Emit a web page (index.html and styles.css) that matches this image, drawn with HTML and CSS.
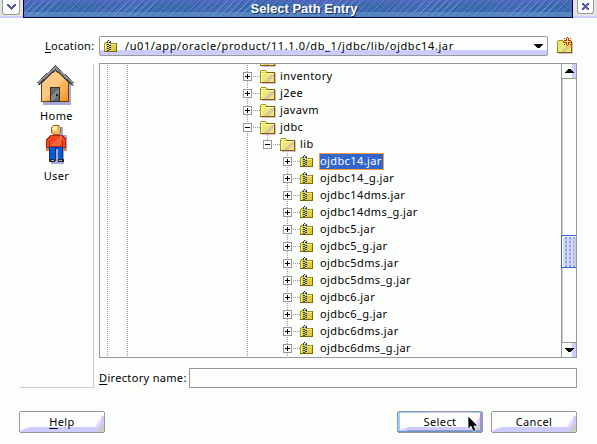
FILE: index.html
```html
<!DOCTYPE html>
<html lang="en">
<head>
<meta charset="utf-8">
<title>Select Path Entry</title>
<link rel="stylesheet" href="styles.css">
</head>
<body>
<svg class="defs" width="0" height="0" aria-hidden="true">
  <defs>
    <linearGradient id="wall" x1="0" y1="0" x2="1" y2="1"><stop offset="0" stop-color="#ffc890"/><stop offset=".5" stop-color="#ffc880"/><stop offset="1" stop-color="#f08818"/></linearGradient>
    <symbol id="folder" viewBox="0 0 17 15">
      <path d="M2 3h14v11H2z" fill="#dcb8e0"/>
      <path d="M0 1h1V0h5v1h1v1h8v11H0z" fill="#a09410"/>
      <path d="M1 1h5v2h8v9H1z" fill="#dcd858"/>
      <path d="M2 4h12v8H2z" fill="#ece878"/>
      <path d="M4 12 11 4h3v2L9 12z" fill="#dcc8a0"/>
      <path d="M1 1h5v1H1zM1 3h13v1H1zM1 4h1v8H1z" fill="#fffcb8"/>
      <path d="M7 2h8v1H7zM14 3h1v10h-1zM0 12h15v1H0z" fill="#806000"/>
    </symbol>
    <symbol id="jar" viewBox="0 0 14 14">
      <path d="M0 4h1V3h3v1h9v9H0z" fill="#a09820"/>
      <path d="M1 4h3v1h8v7H1z" fill="#d4d030"/>
      <path d="M7 10h1V9h1V8h1V7h1V6h1v2h-1v1h-1v1H9v1H8v1H7z" fill="#f4c860"/>
      <path d="M1 5h1v7H1zM7 5h5v1H7z" fill="#f4f090"/>
      <path d="M12 4h1v9h-1zM0 12h13v1H0z" fill="#806800"/>
      <path d="M4 1h2v11H4z" fill="#d4d4d4"/>
      <path d="M3 2h1v2H3zM4 1h1v1H4zM6 2h1v2H6zM5 3h1v1H5zM3 5h2v1H3zM5 6h2v1H5zM3 7h2v1H3zM5 8h2v1H5zM3 9h2v1H3zM5 10h2v1H5zM3 11h2v1H3z" fill="#383830"/>
    </symbol>
    <symbol id="plus" viewBox="0 0 9 9"><path d="M0 0h9v9H0z" fill="#999"/><path d="M1 1h7v7H1z" fill="#fff"/><path d="M2 4h5v1H2zM4 2h1v5H4z"/></symbol>
    <symbol id="minus" viewBox="0 0 9 9"><path d="M0 0h9v9H0z" fill="#999"/><path d="M1 1h7v7H1z" fill="#fff"/><path d="M2 4h5v1H2z"/></symbol>
    <symbol id="face" viewBox="0 0 86 22">
      <path d="M1 21v-2h3v-1h3v-1h3v-1h67v-3h2v-3h2V8h1V5h3v16z" fill="#ccccff"/>
      <path d="M1 19h2v-1h2v-1h3v1H5v1H3v1H1zM77 14h1v-2h2V9h1V6h1V4h1v4h-1v3h-1v3h-2v2h-2z" fill="#ffd8ff"/>
      <path d="M78 21v-3h2v-2h2v-3h3v8z" fill="#ccc"/>
      <path d="M1 0h84v1H1zM1 21h84v1H1zM0 1h1v20H0zM85 1h1v20h-1z" fill="#999"/>
    </symbol>
  </defs>
</svg>
<div class="window">
  <header class="titlebar">
    <div class="corner left"><span class="winbtn"><svg width="18" height="14" viewBox="0 0 18 14"><path d="M4 4h2v1h1v1h1v1h1V6h1V5h1V4h2v2h-1v1h-1v1h-1v1H9v1H8V9H7V8H6V7H5V6H4z" fill="#5858a8"/></svg></span></div>
    <div class="caption">Select Path Entry</div>
    <div class="corner right"><span class="winbtn"><svg width="16" height="14" viewBox="0 0 16 14"><path d="M4 3h2v1h1v1h1V4h1V3h2v2h-1v1H9v1h1v1h1v2H9V9H8V8H7v1H6v1H4V8h1V7h1V6H5V5H4z" fill="#5858a8"/></svg></span></div>
  </header>

  <div class="location">
    <label><u>L</u>ocation:</label>
    <div class="combo">
      <svg class="jar" width="14" height="14"><use href="#jar"/></svg>
      <span class="path">/u01/app/oracle/product/11.1.0/db_1/jdbc/lib/ojdbc14.jar</span>
      <svg class="arrow" width="9" height="5" viewBox="0 0 9 5"><path d="M0 0h9v1H8v1H7v1H6v1H3V3H2V2H1V1H0z"/></svg>
    </div>
    <svg class="newfolder" width="17" height="18" viewBox="0 0 17 18">
      <path d="M2 5h14v12H2z" fill="#dcb8e0"/>
      <path d="M0 4h1V3h5v1h1v1h8v11H0z" fill="#a09410"/>
      <path d="M1 4h5v2h8v9H1z" fill="#ece878"/>
      <path d="M3 15 10 8h4v1l-6 6z" fill="#dccc80"/>
      <path d="M14 5h1v11h-1zM0 15h15v1H0z" fill="#806000"/>
      <path d="M10 0h1v1h1v2h2v1h1v1h-1v1h-2v2h-1v1h-1V8H9V6H7V5H6V4h1V3h2V1h1zM7 1h1v1H7zM13 1h1v1h-1zM7 7h1v1H7zM13 7h1v1h-1z" fill="#c03000"/>
      <path d="M10 1h1v3h3v1h-3v3h-1V5H7V4h3z" fill="#ffd840"/>
      <path d="M10 3h1v1h1v1h-1v1h-1V5H9V4h1z" fill="#fff8c0"/>
    </svg>
  </div>

  <main class="body">
    <nav class="places">
      <svg class="home" width="40" height="40" viewBox="0 0 40 40">
        <path d="M7 15 24 5l13 16h-3v19H6z" fill="#a8a8d8"/>
        <path d="M4 17 18.500 5 32 17v20H4z" fill="url(#wall)"/>
        <path d="M5 37 31 12v8L17 37z" fill="#ffb050" opacity=".65"/>
        <path d="M4 18h1v18h26V17h1v20H4z" fill="#704000"/>
        <path d="M1 19 18.500 3 36 19" fill="none" stroke="#484848" stroke-width="4"/>
        <path d="M1 18 18.500 2.500 36 18" fill="none" stroke="#909090" stroke-width="2"/>
        <path d="M13.500 22.500h9v14h-9z" fill="#686868" stroke="#303030"/>
        <path d="M14 31 22 23v6l-7 7h-1z" fill="#888"/>
        <path d="M19 29h2v2h-2z" fill="#202020"/>
      </svg>
      <span>Home</span>
      <svg class="user" width="26" height="40" viewBox="0 0 26 40">
        <path d="M12 3h7v8h4v16h-3v13H7V28h5z" fill="#a8a8d8"/>
        <path d="M2 24h4v3H2zM18 24h4v3h-4z" fill="#d88040"/>
        <path d="M5 21h14v15h1v1h-6V25h-2v12H5z" fill="#0038a0"/>
        <path d="M6 23h5v12H6zM14 23h4v12h-4z" fill="#0858d0"/>
        <path d="M6 11h12l4 4v9h-3v-1H5v1H2v-9z" fill="#b02810"/>
        <path d="M7 12h10l4 4v7h-2v-6h-1v5H6v-5H5v6H3v-7z" fill="#f84820"/>
        <path d="M7 22 16 12h2l-1 8-3 2z" fill="#f06840"/>
        <circle cx="12" cy="6" r="5" fill="#f0b860" stroke="#a06020"/><circle cx="11" cy="4.500" r="2.500" fill="#fff0b0"/>
        <path d="M5 35h6v3H5zM14 35h6v3h-6z" fill="#282828"/><path d="M7 36h3v1H7zM15 36h3v1h-3z" fill="#aaa"/>
      </svg>
      <span>User</span>
    </nav>

    <section class="treebox">
      <div class="tree">
        <div class="row l0 cut"><svg class="ex" width="9" height="9"><use href="#plus"/></svg><i></i><svg class="folder" width="17" height="15"><use href="#folder"/></svg></div>
        <div class="row l0"><svg class="ex" width="9" height="9"><use href="#plus"/></svg><i></i><svg class="folder" width="17" height="15"><use href="#folder"/></svg><span>inventory</span></div>
        <div class="row l0"><svg class="ex" width="9" height="9"><use href="#plus"/></svg><i></i><svg class="folder" width="17" height="15"><use href="#folder"/></svg><span>j2ee</span></div>
        <div class="row l0"><svg class="ex" width="9" height="9"><use href="#plus"/></svg><i></i><svg class="folder" width="17" height="15"><use href="#folder"/></svg><span>javavm</span></div>
        <div class="row l0"><svg class="ex" width="9" height="9"><use href="#minus"/></svg><i></i><svg class="folder" width="17" height="15"><use href="#folder"/></svg><span>jdbc</span></div>
        <div class="row l1"><svg class="ex" width="9" height="9"><use href="#minus"/></svg><i></i><svg class="folder" width="17" height="15"><use href="#folder"/></svg><span>lib</span></div>
        <div class="row l2"><svg class="ex" width="9" height="9"><use href="#plus"/></svg><i></i><svg class="jar" width="14" height="14"><use href="#jar"/></svg><span class="selected">ojdbc14.jar</span></div>
        <div class="row l2"><svg class="ex" width="9" height="9"><use href="#plus"/></svg><i></i><svg class="jar" width="14" height="14"><use href="#jar"/></svg><span>ojdbc14_g.jar</span></div>
        <div class="row l2"><svg class="ex" width="9" height="9"><use href="#plus"/></svg><i></i><svg class="jar" width="14" height="14"><use href="#jar"/></svg><span>ojdbc14dms.jar</span></div>
        <div class="row l2"><svg class="ex" width="9" height="9"><use href="#plus"/></svg><i></i><svg class="jar" width="14" height="14"><use href="#jar"/></svg><span>ojdbc14dms_g.jar</span></div>
        <div class="row l2"><svg class="ex" width="9" height="9"><use href="#plus"/></svg><i></i><svg class="jar" width="14" height="14"><use href="#jar"/></svg><span>ojdbc5.jar</span></div>
        <div class="row l2"><svg class="ex" width="9" height="9"><use href="#plus"/></svg><i></i><svg class="jar" width="14" height="14"><use href="#jar"/></svg><span>ojdbc5_g.jar</span></div>
        <div class="row l2"><svg class="ex" width="9" height="9"><use href="#plus"/></svg><i></i><svg class="jar" width="14" height="14"><use href="#jar"/></svg><span>ojdbc5dms.jar</span></div>
        <div class="row l2"><svg class="ex" width="9" height="9"><use href="#plus"/></svg><i></i><svg class="jar" width="14" height="14"><use href="#jar"/></svg><span>ojdbc5dms_g.jar</span></div>
        <div class="row l2"><svg class="ex" width="9" height="9"><use href="#plus"/></svg><i></i><svg class="jar" width="14" height="14"><use href="#jar"/></svg><span>ojdbc6.jar</span></div>
        <div class="row l2"><svg class="ex" width="9" height="9"><use href="#plus"/></svg><i></i><svg class="jar" width="14" height="14"><use href="#jar"/></svg><span>ojdbc6_g.jar</span></div>
        <div class="row l2"><svg class="ex" width="9" height="9"><use href="#plus"/></svg><i></i><svg class="jar" width="14" height="14"><use href="#jar"/></svg><span>ojdbc6dms.jar</span></div>
        <div class="row l2"><svg class="ex" width="9" height="9"><use href="#plus"/></svg><i></i><svg class="jar" width="14" height="14"><use href="#jar"/></svg><span>ojdbc6dms_g.jar</span></div>
      </div>
      <div class="scrollbar">
        <div class="step up"><svg width="9" height="5" viewBox="0 0 9 5"><path d="M0 4h9V3H8V2H7V1H6V0H3v1H2v1H1v1H0z"/></svg></div>
        <div class="track"><div class="thumb"></div></div>
        <div class="step down"><svg width="9" height="5" viewBox="0 0 9 5"><path d="M0 0h9v1H8v1H7v1H6v1H3V3H2V2H1V1H0z"/></svg></div>
      </div>
    </section>

    <div class="directory">
      <label><u>D</u>irectory name:</label>
      <div class="field"></div>
    </div>
  </main>

  <footer class="actions">
    <div class="btn help"><svg width="86" height="22"><use href="#face"/></svg><span><u>H</u>elp</span></div>
    <div class="btn select"><svg width="86" height="22" viewBox="0 0 86 22"><use href="#face" width="86" height="22"/><path d="M1 1h84v1H3v18H1z" fill="#99ccff"/><path d="M30 1h46v1H30z" fill="#ccccff"/><path d="M83 2h2v18h-2zM10 19h73v1H10z" fill="#9999cc"/><path d="M1 20h84v1H1z" fill="#6699cc"/></svg><span>Select</span></div>
    <div class="btn cancel"><svg width="86" height="22"><use href="#face"/></svg><span>Cancel</span></div>
  </footer>
  <svg class="pointer" width="12" height="19" viewBox="0 0 12 19"><path d="M1 1v13l3-3 2 5h3l-2-5h4z" fill="#000" stroke="#fff" stroke-width=".7"/></svg>
</div>
</body>
</html>
```

FILE: styles.css
```css
* { box-sizing: border-box; }
body { margin: 0; background: #fcfefc; color: #000; font: 11px/17px "Noto Sans", sans-serif; letter-spacing: .4px; }
svg { display: block; flex: none; shape-rendering: crispEdges; }
.defs { position: absolute; }
.window { position: relative; width: 597px; height: 444px; overflow: hidden; }
u { text-decoration: underline; text-underline-offset: 2px; text-decoration-skip-ink: none; text-decoration-thickness: 1px; }

.titlebar { display: flex; height: 18px; }
.corner { width: 23px; height: 18px; background: #e4e4e4; border-bottom: 2px solid #ccccff; padding-left: 2px; overflow: hidden; }
.corner.right { width: 24px; padding-left: 4px; }
.winbtn { display: block; width: 18px; height: 15px; background: #fcfefc; border: 1px solid #999; border-top: 0; border-radius: 0 0 3px 3px; }
.corner.right .winbtn { width: 17px; height: 14px; }
.caption {
  flex: 1; height: 18px; padding-left: 12px; border: solid #000040; border-width: 0 1px 1px;
  background:
    linear-gradient(#6666cc60 0 3px, transparent 3px 12px, #6699cc90 12px),
    repeating-linear-gradient(135deg, #3068a0 0 2px, #6064cc 2px 3px, #3468a8 3px 4px, #5c88cc 4px 5px);
  color: #fff; font: bold 13px/17px "Liberation Sans", sans-serif; letter-spacing: 0; text-align: center;
  text-shadow: 1px 1px #203060;
}

.location { display: flex; height: 20px; margin: 18px 20px 0 45px; }
.location label { width: 54px; line-height: 19px; letter-spacing: .25px; }
.combo { display: flex; width: 449px; height: 20px; padding-left: 4px; border: 1px solid #999; border-radius: 2px; background: linear-gradient(#fcfefc 13px, #ccccff 13px); }
.combo .jar { margin-top: 2px; }
.path { flex: 1; margin-left: 7px; line-height: 17px; white-space: nowrap; letter-spacing: .6px; }
.arrow { margin: 7px 4px 0 0; }
.newfolder { margin: 1px 0 0 9px; }

.body { display: grid; grid-template: 305px 20px / 79px 478px; margin: 7px 0 0 20px; }
.places { grid-row: 1 / 3; display: flex; flex-direction: column; width: 74px; height: 324px; margin-top: 1px; border: solid #ccc; border-width: 0 1px 1px 0; }
.places span { width: 73px; text-align: center; line-height: 16px; height: 16px; }
.home { margin: 1px 0 3px 17px; }
.user { margin: 0 0 4px 24px; }

.treebox { display: flex; height: 295px; border: 1px solid #999; overflow: hidden; }
.tree {
  flex: 1; margin-top: -13px; height: 306px;
  --dots: repeating-linear-gradient(#999 0 1px, transparent 1px 2px);
  background: var(--dots) 7px 0 / 1px 100% no-repeat, var(--dots) 27px 0 / 1px 100% no-repeat, var(--dots) 147px 0 / 1px 100% no-repeat, var(--dots) 187px 102px / 1px 204px no-repeat, var(--dots) 167px 80px / 1px 18px no-repeat;
}
.row { display: flex; height: 17px; padding-left: 143px; white-space: nowrap; }
.row.l1 { padding-left: 163px; }
.row.l2 { padding-left: 183px; }
.ex { margin-top: 4px; }
.row i { width: 8px; height: 1px; margin-top: 8px; background: repeating-linear-gradient(90deg, transparent 0 1px, #999 1px 2px); }
.row .folder { margin-top: 2px; }
.row .jar { margin-top: 1px; }
.row span { margin-left: 2px; height: 17px; padding: 0 1px; line-height: 16px; }
.row.l2 span { margin-left: 5px; }
.row .selected { width: 65px; background: #3366cc; color: #fff; border: 1px solid #ff9933; line-height: 14px; padding: 0; }

.scrollbar { display: flex; flex-direction: column; width: 15px; border-left: 1px solid #999; }
.step { height: 15px; padding: 5px 0 0 3px; background: linear-gradient(90deg, #fcfefc 10px, #ccccff 10px); }
.step.up { border-bottom: 1px solid #999; }
.step.down { border-top: 1px solid #999; }
.track { flex: 1; padding-top: 156px; border-left: 1px solid #ccc; }
.thumb { height: 33px; margin-left: -2px; border: 1px solid #3366cc; border-right: 0; box-shadow: inset 1px 1px #fff, inset -2px 0 #ccc; background: radial-gradient(#3366cc 0 .6px, transparent .8px) 2px 4px / 4px 4px, radial-gradient(#fff 0 .6px, transparent .8px) 0 4px / 4px 4px, #ccccff; }

.directory { display: flex; height: 20px; }
.directory label { width: 90px; line-height: 19px; white-space: nowrap; letter-spacing: .33px; }
.field { flex: 1; height: 20px; border: 1px solid #999; }

.actions { display: flex; margin: 23px 20px 0 19px; }
.btn { display: grid; width: 86px; height: 22px; line-height: 21px; text-align: center; }
.btn svg, .btn span { grid-area: 1 / 1; }
.select { margin: 0 8px 0 292px; }
.pointer { position: absolute; left: 467px; top: 415px; shape-rendering: auto; }
```
